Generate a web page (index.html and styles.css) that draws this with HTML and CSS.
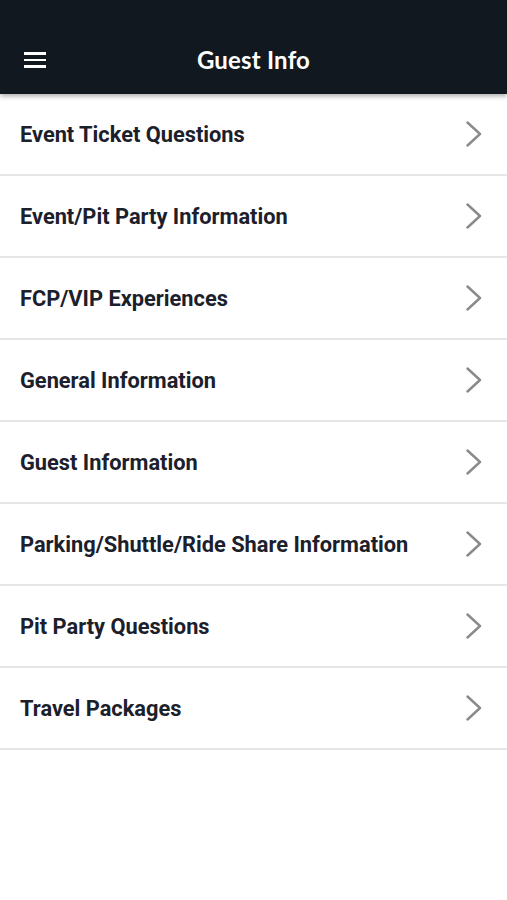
FILE: index.html
```html
<!DOCTYPE html>
<html lang="en">
<head>
    <meta charset="UTF-8">
    <meta name="viewport" content="width=device-width, initial-scale=1.0">
    <title>Guest Info</title>
    <link rel="stylesheet" href="styles.css">
</head>
<body>

    <div class="top-bar">
        <div class="status-bar"></div>
        <div class="title-row">
            <button class="menu-button" aria-label="Menu">
                <span></span><span></span><span></span>
            </button>
            <div class="title">Guest Info</div>
        </div>
    </div>

    <div class="list">
        <div class="list-item"><span class="item-name">Event Ticket Questions</span><svg class="chevron" viewBox="0 0 16 26"><polyline points="1.5,1.5 14,13 1.5,24.5"/></svg></div>
        <div class="list-item"><span class="item-name">Event/Pit Party Information</span><svg class="chevron" viewBox="0 0 16 26"><polyline points="1.5,1.5 14,13 1.5,24.5"/></svg></div>
        <div class="list-item"><span class="item-name">FCP/VIP Experiences</span><svg class="chevron" viewBox="0 0 16 26"><polyline points="1.5,1.5 14,13 1.5,24.5"/></svg></div>
        <div class="list-item"><span class="item-name">General Information</span><svg class="chevron" viewBox="0 0 16 26"><polyline points="1.5,1.5 14,13 1.5,24.5"/></svg></div>
        <div class="list-item"><span class="item-name">Guest Information</span><svg class="chevron" viewBox="0 0 16 26"><polyline points="1.5,1.5 14,13 1.5,24.5"/></svg></div>
        <div class="list-item"><span class="item-name">Parking/Shuttle/Ride Share Information</span><svg class="chevron" viewBox="0 0 16 26"><polyline points="1.5,1.5 14,13 1.5,24.5"/></svg></div>
        <div class="list-item"><span class="item-name">Pit Party Questions</span><svg class="chevron" viewBox="0 0 16 26"><polyline points="1.5,1.5 14,13 1.5,24.5"/></svg></div>
        <div class="list-item"><span class="item-name">Travel Packages</span><svg class="chevron" viewBox="0 0 16 26"><polyline points="1.5,1.5 14,13 1.5,24.5"/></svg></div>
    </div>

</body>
</html>
```

FILE: styles.css
```css
body {
    margin: 0;
    font-family: Roboto, "Liberation Sans", sans-serif;
    background-color: #fff;
}
.top-bar {
    background-color: #12181f;
    height: 94px;
    box-shadow: 0 2px 5px rgba(0, 0, 0, 0.35);
    position: relative;
    z-index: 10;
}
.status-bar {
    height: 26px;
}
.title-row {
    height: 68px;
    display: flex;
    align-items: center;
    justify-content: center;
    position: relative;
}
.menu-button {
    position: absolute;
    left: 24px;
    top: 26px;
    width: 22px;
    padding: 0;
    border: none;
    background: none;
    display: flex;
    flex-direction: column;
    gap: 4px;
}
.menu-button span {
    display: block;
    height: 2.5px;
    background-color: #fff;
}
.title {
    color: #fff;
    font-family: Lato, "Open Sans", sans-serif;
    font-size: 24px;
    font-weight: bold;
    margin-top: -1px;
    letter-spacing: 0.2px;
}
.list-item {
    height: 80px;
    border-bottom: 2px solid #e6e6e6;
    display: flex;
    align-items: center;
    justify-content: space-between;
    padding: 0 25px 0 20px;
}
.item-name {
    font-size: 21.8px;
    font-weight: bold;
    color: #1b202b;
}
.chevron {
    width: 16px;
    height: 26px;
    fill: none;
    stroke: #8a8a8a;
    stroke-width: 2.4;
    stroke-linecap: round;
    stroke-linejoin: round;
}
```
